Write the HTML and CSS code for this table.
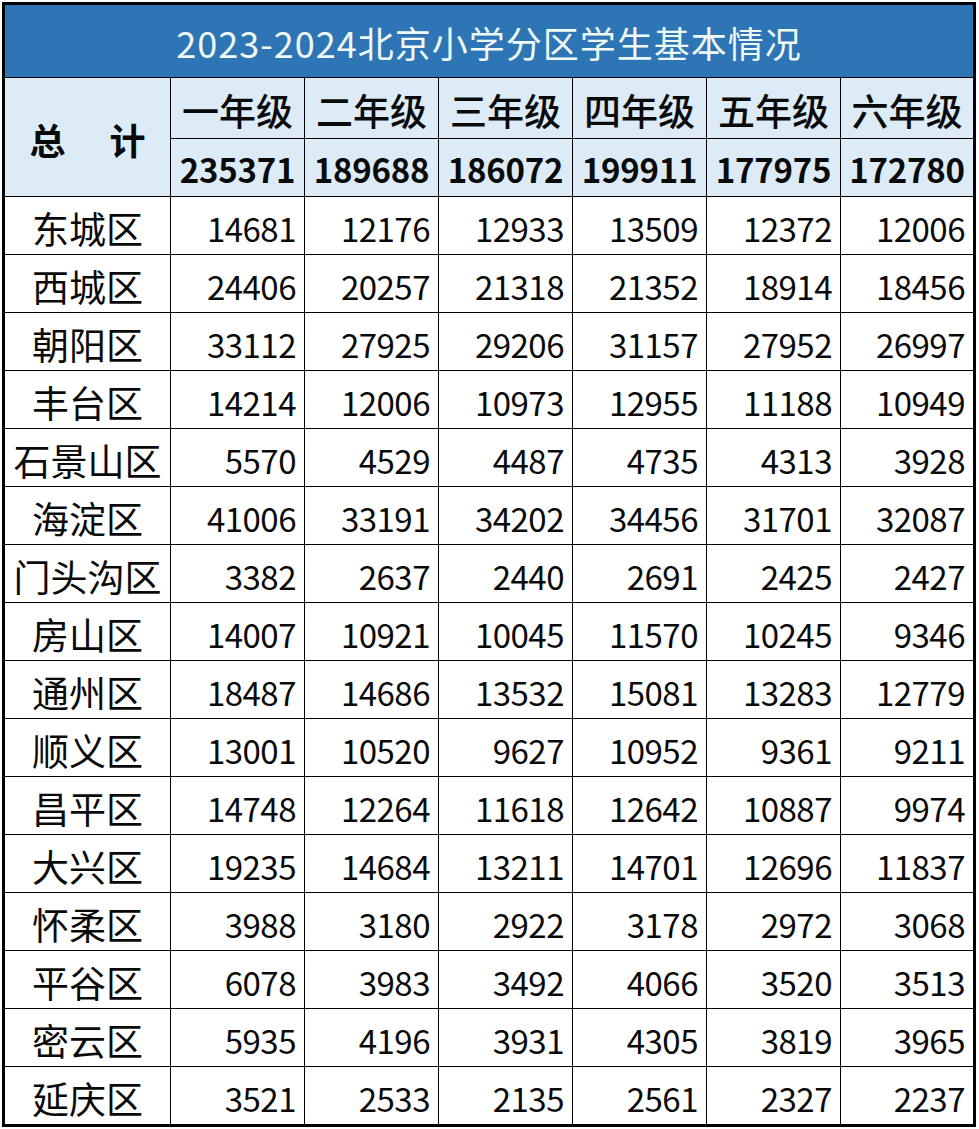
FILE: index.html
```html
<!DOCTYPE html>
<html lang="zh-CN">
<head>
<meta charset="utf-8">
<title>2023-2024北京小学分区学生基本情况</title>
<link rel="stylesheet" href="styles.css">
</head>
<body>
<div class="sheet">
  <div class="cell title">2023-2024北京小学分区学生基本情况</div>
  <div class="cell head corner"><span>总</span><span>计</span></div>
  <div class="cell head grade">一年级</div>
  <div class="cell head grade">二年级</div>
  <div class="cell head grade">三年级</div>
  <div class="cell head grade">四年级</div>
  <div class="cell head grade">五年级</div>
  <div class="cell head grade">六年级</div>
  <div class="cell head total">235371</div>
  <div class="cell head total">189688</div>
  <div class="cell head total">186072</div>
  <div class="cell head total">199911</div>
  <div class="cell head total">177975</div>
  <div class="cell head total">172780</div>

  <div class="cell name">东城区</div><div class="cell num">14681</div><div class="cell num">12176</div><div class="cell num">12933</div><div class="cell num">13509</div><div class="cell num">12372</div><div class="cell num">12006</div>
  <div class="cell name">西城区</div><div class="cell num">24406</div><div class="cell num">20257</div><div class="cell num">21318</div><div class="cell num">21352</div><div class="cell num">18914</div><div class="cell num">18456</div>
  <div class="cell name">朝阳区</div><div class="cell num">33112</div><div class="cell num">27925</div><div class="cell num">29206</div><div class="cell num">31157</div><div class="cell num">27952</div><div class="cell num">26997</div>
  <div class="cell name">丰台区</div><div class="cell num">14214</div><div class="cell num">12006</div><div class="cell num">10973</div><div class="cell num">12955</div><div class="cell num">11188</div><div class="cell num">10949</div>
  <div class="cell name">石景山区</div><div class="cell num">5570</div><div class="cell num">4529</div><div class="cell num">4487</div><div class="cell num">4735</div><div class="cell num">4313</div><div class="cell num">3928</div>
  <div class="cell name">海淀区</div><div class="cell num">41006</div><div class="cell num">33191</div><div class="cell num">34202</div><div class="cell num">34456</div><div class="cell num">31701</div><div class="cell num">32087</div>
  <div class="cell name">门头沟区</div><div class="cell num">3382</div><div class="cell num">2637</div><div class="cell num">2440</div><div class="cell num">2691</div><div class="cell num">2425</div><div class="cell num">2427</div>
  <div class="cell name">房山区</div><div class="cell num">14007</div><div class="cell num">10921</div><div class="cell num">10045</div><div class="cell num">11570</div><div class="cell num">10245</div><div class="cell num">9346</div>
  <div class="cell name">通州区</div><div class="cell num">18487</div><div class="cell num">14686</div><div class="cell num">13532</div><div class="cell num">15081</div><div class="cell num">13283</div><div class="cell num">12779</div>
  <div class="cell name">顺义区</div><div class="cell num">13001</div><div class="cell num">10520</div><div class="cell num">9627</div><div class="cell num">10952</div><div class="cell num">9361</div><div class="cell num">9211</div>
  <div class="cell name">昌平区</div><div class="cell num">14748</div><div class="cell num">12264</div><div class="cell num">11618</div><div class="cell num">12642</div><div class="cell num">10887</div><div class="cell num">9974</div>
  <div class="cell name">大兴区</div><div class="cell num">19235</div><div class="cell num">14684</div><div class="cell num">13211</div><div class="cell num">14701</div><div class="cell num">12696</div><div class="cell num">11837</div>
  <div class="cell name">怀柔区</div><div class="cell num">3988</div><div class="cell num">3180</div><div class="cell num">2922</div><div class="cell num">3178</div><div class="cell num">2972</div><div class="cell num">3068</div>
  <div class="cell name">平谷区</div><div class="cell num">6078</div><div class="cell num">3983</div><div class="cell num">3492</div><div class="cell num">4066</div><div class="cell num">3520</div><div class="cell num">3513</div>
  <div class="cell name">密云区</div><div class="cell num">5935</div><div class="cell num">4196</div><div class="cell num">3931</div><div class="cell num">4305</div><div class="cell num">3819</div><div class="cell num">3965</div>
  <div class="cell name">延庆区</div><div class="cell num">3521</div><div class="cell num">2533</div><div class="cell num">2135</div><div class="cell num">2561</div><div class="cell num">2327</div><div class="cell num">2237</div>
</div>
</body>
</html>
```

FILE: styles.css
```css
html, body {
  margin: 0;
  padding: 0;
  background: #ffffff;
}

.sheet {
  margin: 2px 0 0 2px;
  width: max-content;
  border: 3px solid #000000;
  display: grid;
  grid-template-columns: 165px repeat(5, 133px) 132px;
  grid-template-rows: 72px 60px 57px repeat(16, 57px);
  gap: 1px;
  background: #000000;
  font-family: "Noto Sans CJK SC", "Noto Sans", sans-serif;
  color: #0a0a0a;
  line-height: 1;
}

.cell {
  background: #ffffff;
  display: flex;
  align-items: center;
  overflow: hidden;
  white-space: nowrap;
}

.title {
  grid-column: 1 / -1;
  background: #2e75b6;
  color: #eef8f4;
  justify-content: center;
  font-size: 36px;
  letter-spacing: 1px;
  padding-top: 2px;
}

.head {
  background: #ddebf7;
  justify-content: center;
}

.corner {
  grid-row: span 2;
  font-size: 36px;
  font-weight: 700;
  gap: 44px;
  padding-top: 4px;
}

.grade {
  font-size: 37px;
  font-weight: 500;
  padding-top: 4px;
}

.total {
  font-size: 33px;
  font-weight: 700;
  letter-spacing: -0.2px;
  padding-top: 4px;
}

.name {
  justify-content: center;
  font-size: 37px;
  padding-top: 5px;
}

.num {
  justify-content: flex-end;
  padding-right: 8px;
  padding-top: 5px;
  font-size: 33px;
  letter-spacing: -0.5px;
}
```
